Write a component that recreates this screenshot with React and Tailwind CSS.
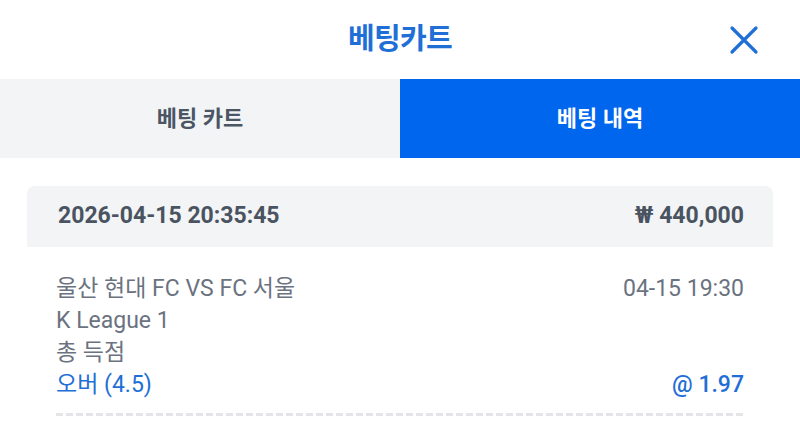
import { useState } from "react";

const FONT = { fontFamily: "Roboto, 'Noto Sans CJK KR', sans-serif" };

export default function App() {
  const [tab, setTab] = useState("history");

  return (
    <div className="w-[800px] h-[432px] bg-white overflow-hidden" style={FONT}>
      <header className="h-[79px] flex items-center justify-center relative">
        <h1 className="text-[29px] font-bold text-[#1f6fd6] tracking-tight">베팅카트</h1>
        <button className="absolute right-[40px] top-[24px] text-[#1f6fd6]">
          <svg width="32" height="32" viewBox="0 0 32 32" fill="none" stroke="currentColor" strokeWidth="3.2" strokeLinecap="round">
            <path d="M4 4 L28 28 M28 4 L4 28" />
          </svg>
        </button>
      </header>

      <div className="grid grid-cols-2 h-[79px]">
        <button
          onClick={() => setTab("cart")}
          className={`text-[22px] font-bold ${tab === "cart" ? "bg-[#0066ee] text-white" : "bg-[#f2f4f6] text-[#4b5563]"}`}
        >
          베팅 카트
        </button>
        <button
          onClick={() => setTab("history")}
          className={`text-[22px] font-bold ${tab === "history" ? "bg-[#0066ee] text-white" : "bg-[#f2f4f6] text-[#4b5563]"}`}
        >
          베팅 내역
        </button>
      </div>

      <div className="mx-[27px] mt-[28px] rounded-t-lg">
        <div className="h-[61px] bg-[#f2f4f6] rounded-t-lg flex items-center justify-between pl-[31px] pr-[29px] text-[#4a5360] text-[23px] font-bold">
          <span>2026-04-15 20:35:45</span>
          <span>₩ 440,000</span>
        </div>

        <div className="px-[29px] pt-[26px]">
          <div className="flex justify-between text-[23px] leading-[32px]">
            <div className="text-[#6b7280]">
              <div>울산 현대 FC VS FC 서울</div>
              <div>K League 1</div>
              <div>총 득점</div>
              <div className="text-[#1f6fd6]">오버 (4.5)</div>
            </div>
            <div className="flex flex-col justify-between items-end">
              <div className="text-[#6b7280]">04-15 19:30</div>
              <div className="text-[#1f6fd6] font-medium">@ 1.97</div>
            </div>
          </div>
          <div className="mt-[12px] h-[3px] bg-[repeating-linear-gradient(90deg,#e3e5e8_0_7px,transparent_7px_10px)]" />
        </div>
      </div>
    </div>
  );
}
